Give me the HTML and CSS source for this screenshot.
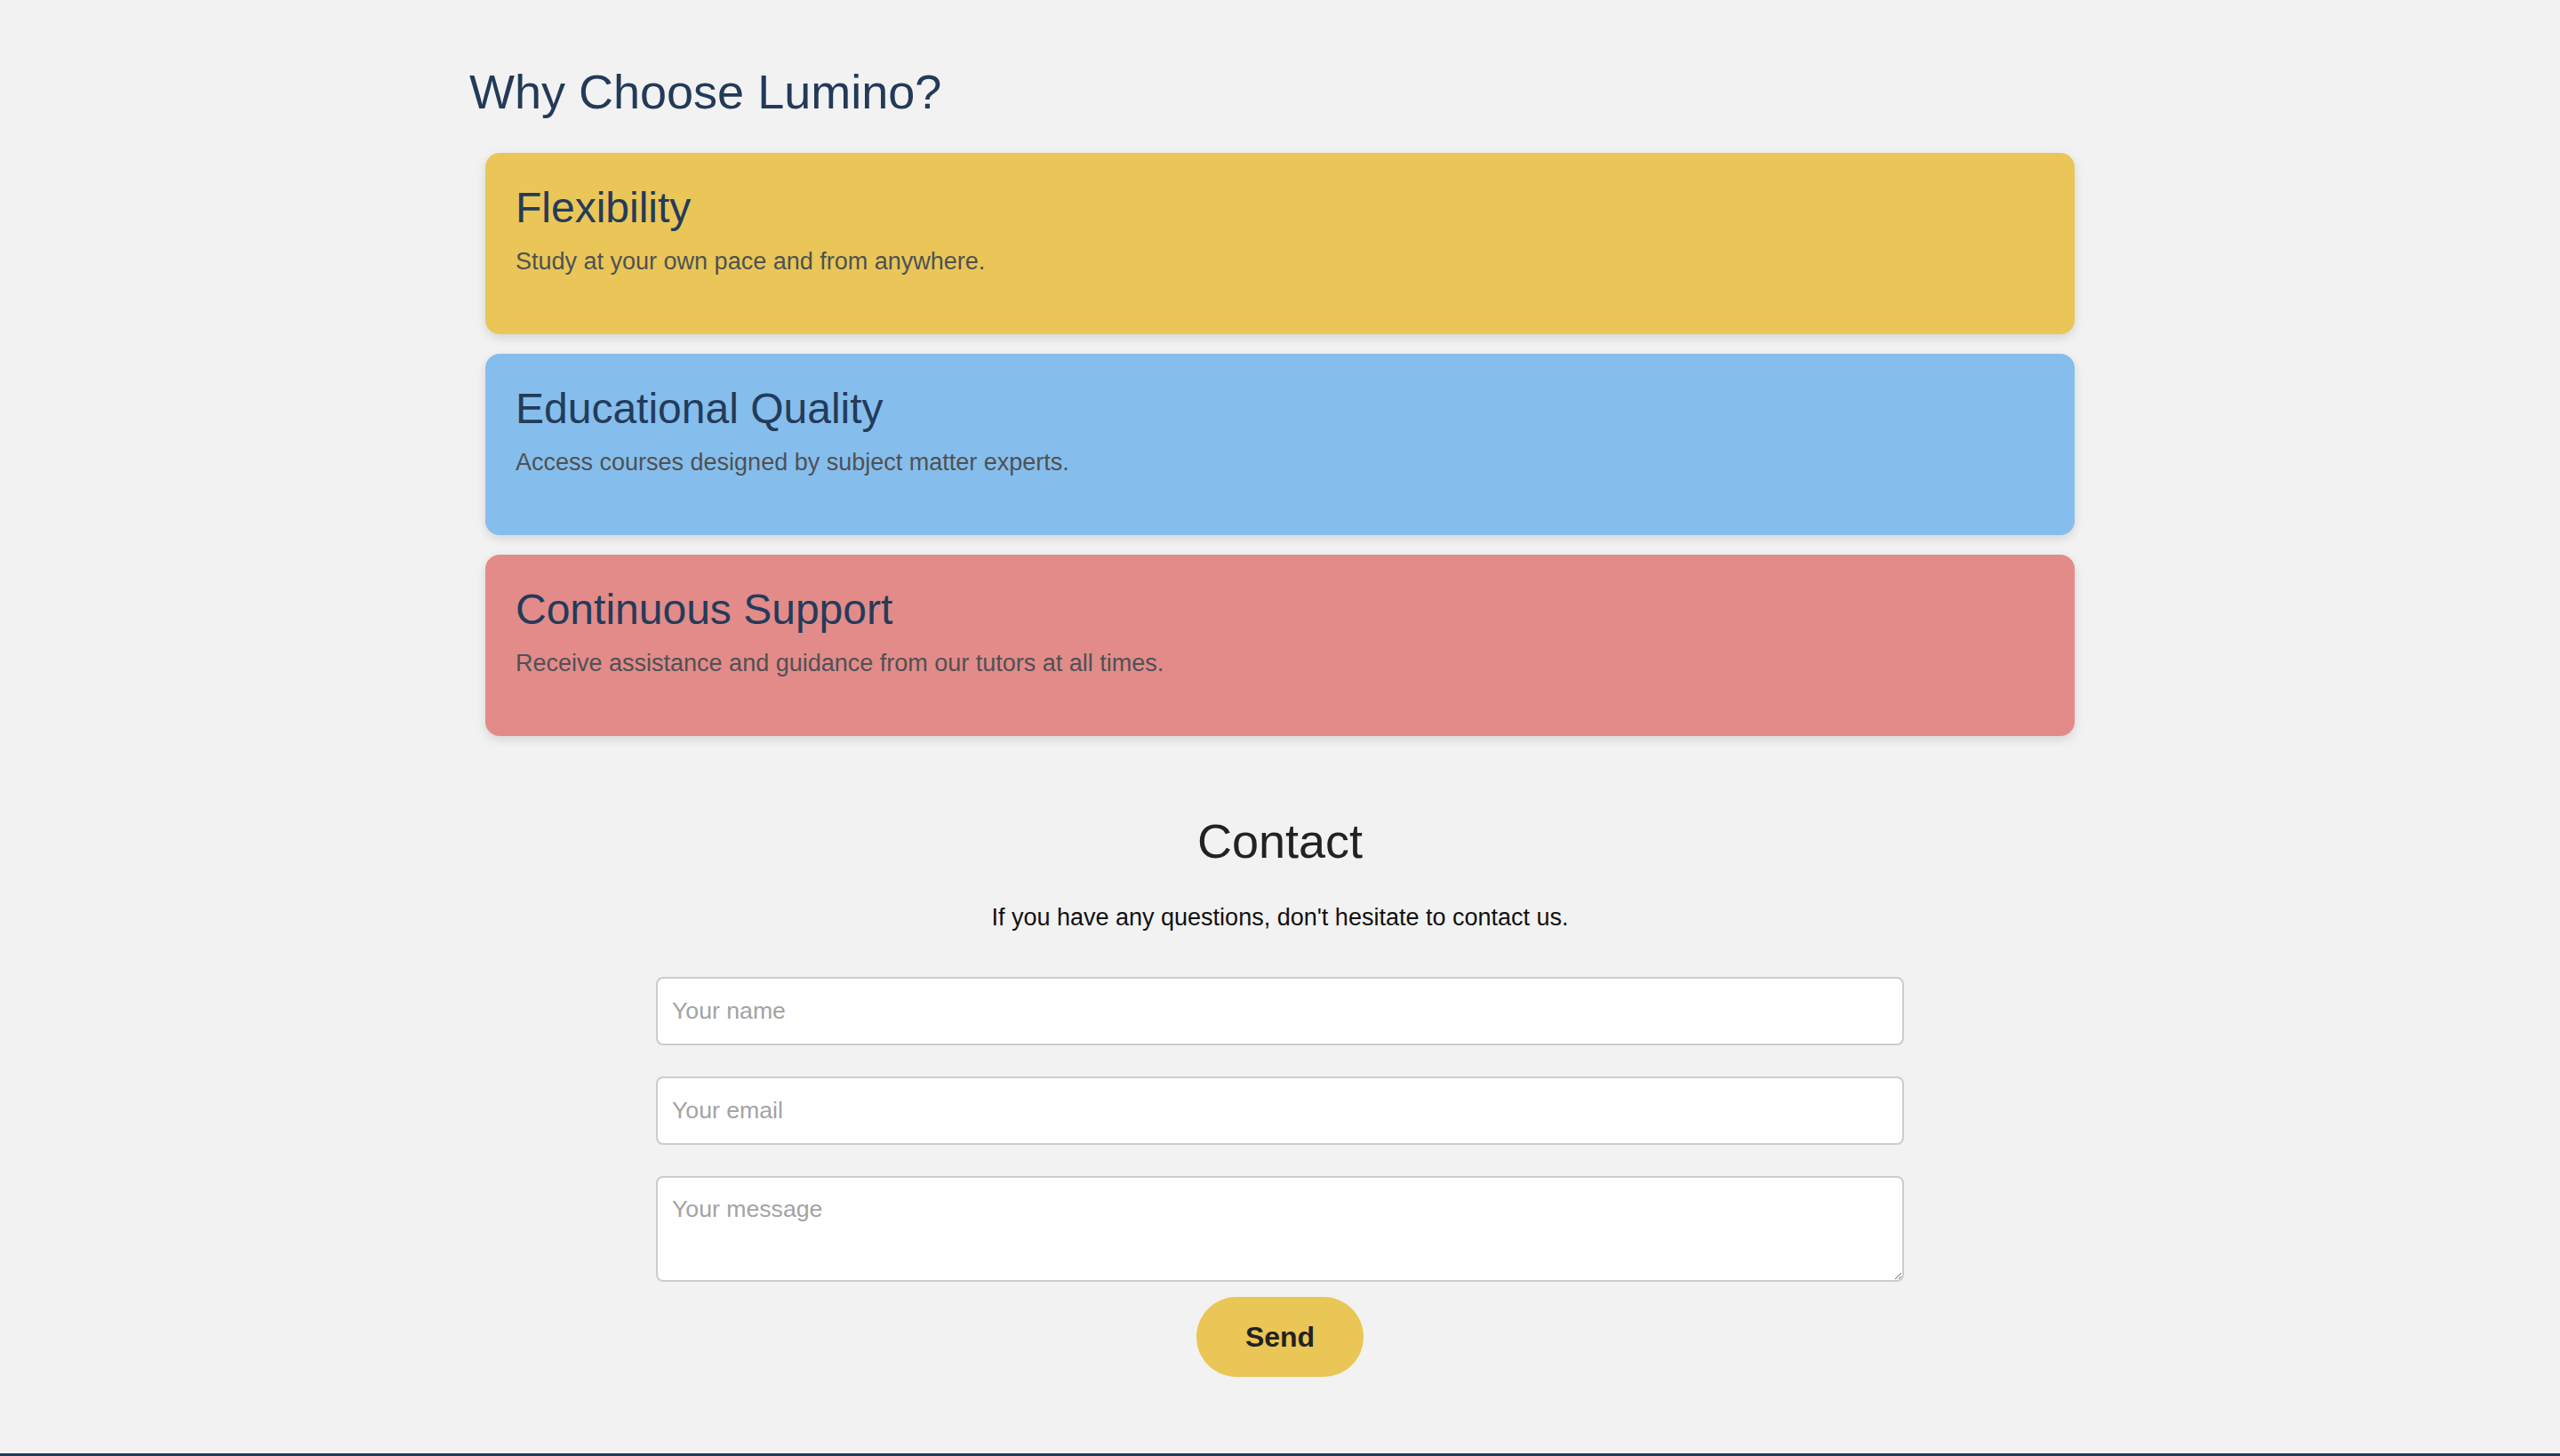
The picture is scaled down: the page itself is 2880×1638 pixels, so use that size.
FILE: index.html
```html
<!DOCTYPE html>
<html lang="en">
<head>
<meta charset="utf-8">
<title>Lumino</title>
<link rel="stylesheet" href="styles.css">
</head>
<body>
<section class="features">
  <h2 class="features-title">Why Choose Lumino?</h2>
  <div class="card card-yellow">
    <h3 class="card-title">Flexibility</h3>
    <p class="card-text">Study at your own pace and from anywhere.</p>
  </div>
  <div class="card card-blue">
    <h3 class="card-title">Educational Quality</h3>
    <p class="card-text">Access courses designed by subject matter experts.</p>
  </div>
  <div class="card card-red">
    <h3 class="card-title">Continuous Support</h3>
    <p class="card-text">Receive assistance and guidance from our tutors at all times.</p>
  </div>
</section>

<section class="contact">
  <h2 class="contact-title">Contact</h2>
  <p class="contact-text">If you have any questions, don't hesitate to contact us.</p>
  <form class="contact-form">
    <input class="field" type="text" placeholder="Your name">
    <input class="field" type="email" placeholder="Your email">
    <textarea class="field field-area" placeholder="Your message"></textarea>
    <button class="send" type="button">Send</button>
  </form>
</section>

<footer class="footer"></footer>
</body>
</html>
```

FILE: styles.css
```css
* {
  box-sizing: border-box;
}

html, body {
  margin: 0;
  padding: 0;
}

body {
  background: #f2f2f2;
  font-family: "Liberation Sans", Arial, Helvetica, sans-serif;
  color: #222;
}

.features {
  width: 1824px;
  margin: 0 auto;
  padding-top: 72px;
}

.features-title {
  margin: 0 0 38px;
  font-size: 54px;
  font-weight: 400;
  line-height: normal;
  color: #233a58;
}

.card {
  margin: 0 18px 22px;
  padding: 34px 34px 66px;
  border-radius: 16px;
  box-shadow: 0 4px 12px rgba(0, 0, 0, 0.12);
}

.card:last-child {
  margin-bottom: 0;
}

.card-yellow { background: #e9c657; }
.card-blue { background: #85beec; }
.card-red { background: #e28b89; }

.card-title {
  margin: 0 0 18px;
  font-size: 48px;
  font-weight: 400;
  line-height: normal;
  color: #243b5a;
}

.card-text {
  margin: 0;
  font-size: 27px;
  line-height: normal;
  color: #4f5155;
}

.contact {
  margin-top: 87px;
  display: flex;
  flex-direction: column;
  align-items: center;
}

.contact-title {
  margin: 0 0 40px;
  font-size: 54px;
  font-weight: 400;
  line-height: normal;
  color: #222;
}

.contact-text {
  margin: 0 0 51px;
  font-size: 27px;
  line-height: normal;
  color: #111;
}

.contact-form {
  width: 1404px;
  display: flex;
  flex-direction: column;
  align-items: center;
}

.field {
  display: block;
  width: 100%;
  height: 77px;
  margin: 0 0 35px;
  padding: 0 16px;
  border: 2px solid #cccccc;
  border-radius: 8px;
  background: #fff;
  font-family: "Liberation Sans", Arial, Helvetica, sans-serif;
  font-size: 26.67px;
  color: #222;
  outline: none;
}

.field::placeholder {
  color: #a3a3a3;
}

.field-area {
  height: 119px;
  margin-bottom: 17px;
  padding: 20px 16px;
  resize: vertical;
}

.send {
  width: 188px;
  height: 90px;
  border: none;
  border-radius: 45px;
  background: #e9c655;
  font-family: "Liberation Sans", Arial, Helvetica, sans-serif;
  font-size: 32px;
  font-weight: 700;
  color: #222;
  cursor: pointer;
}

.footer {
  margin-top: 86px;
  height: 200px;
  background: #213a56;
}
```
